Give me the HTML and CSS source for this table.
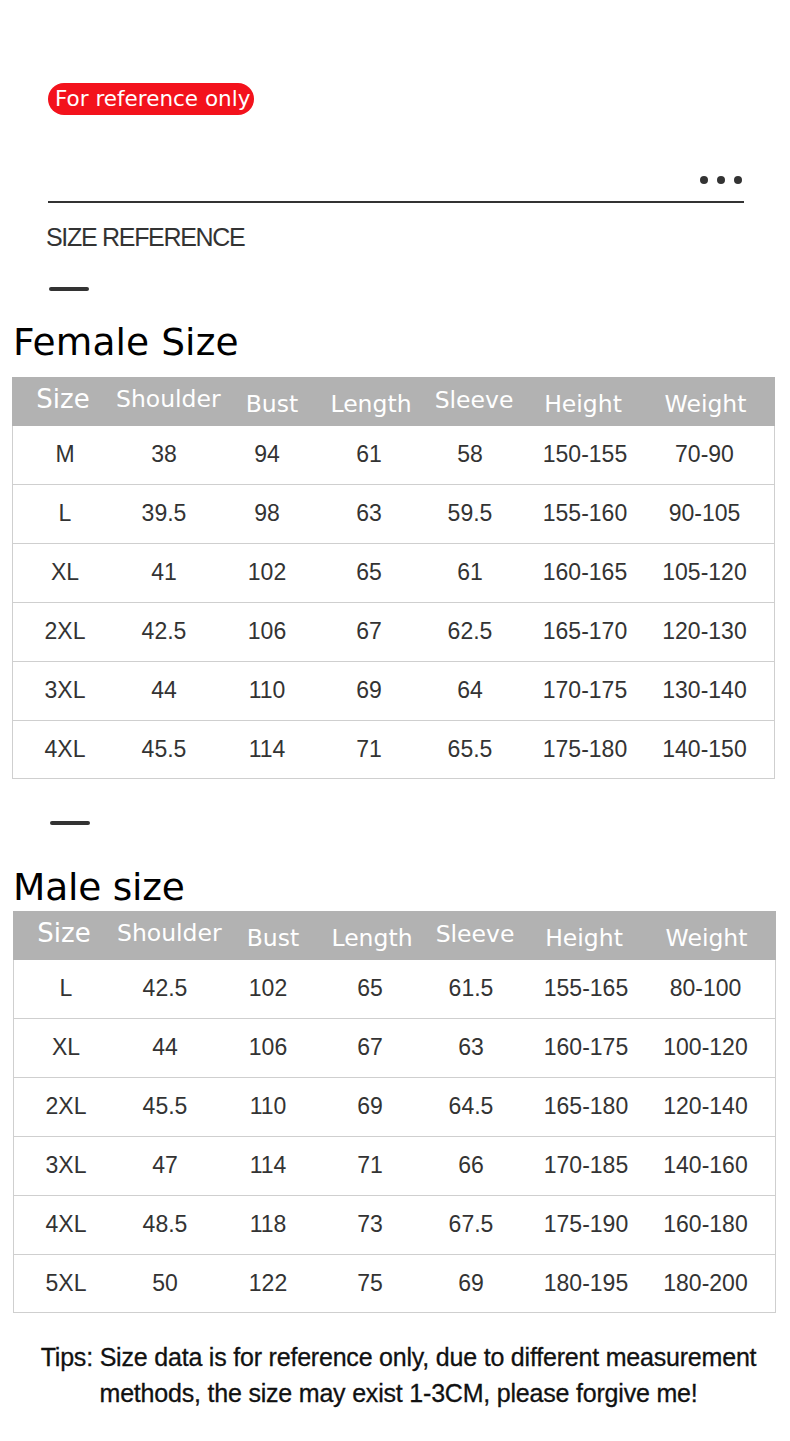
FILE: index.html
```html
<!DOCTYPE html>
<html>
<head>
<meta charset="utf-8">
<link rel="stylesheet" href="styles.css">
</head>
<body>
<div class="page">
  <div class="top">
    <span class="pill">For reference only</span>
  </div>
  <div class="rule-row">
    <div class="dots"><i></i><i></i><i></i></div>
    <div class="rule"></div>
  </div>
  <div class="ref-title">SIZE REFERENCE</div>
  <div class="dash dash-1"></div>
  <h2 class="sec-title female">Female Size</h2>
  <div class="table t-female">
    <div class="row head">
      <div class="c h-size">Size</div><div class="c h-shoulder">Shoulder</div><div class="c h-bust">Bust</div><div class="c h-length">Length</div><div class="c h-sleeve">Sleeve</div><div class="c h-height">Height</div><div class="c h-weight">Weight</div>
    </div>
    <div class="row"><div class="c">M</div><div class="c">38</div><div class="c">94</div><div class="c">61</div><div class="c">58</div><div class="c">150-155</div><div class="c">70-90</div></div>
    <div class="row"><div class="c">L</div><div class="c">39.5</div><div class="c">98</div><div class="c">63</div><div class="c">59.5</div><div class="c">155-160</div><div class="c">90-105</div></div>
    <div class="row"><div class="c">XL</div><div class="c">41</div><div class="c">102</div><div class="c">65</div><div class="c">61</div><div class="c">160-165</div><div class="c">105-120</div></div>
    <div class="row"><div class="c">2XL</div><div class="c">42.5</div><div class="c">106</div><div class="c">67</div><div class="c">62.5</div><div class="c">165-170</div><div class="c">120-130</div></div>
    <div class="row"><div class="c">3XL</div><div class="c">44</div><div class="c">110</div><div class="c">69</div><div class="c">64</div><div class="c">170-175</div><div class="c">130-140</div></div>
    <div class="row last"><div class="c">4XL</div><div class="c">45.5</div><div class="c">114</div><div class="c">71</div><div class="c">65.5</div><div class="c">175-180</div><div class="c">140-150</div></div>
  </div>
  <div class="dash dash-2"></div>
  <h2 class="sec-title male">Male size</h2>
  <div class="table t-male">
    <div class="row head">
      <div class="c h-size">Size</div><div class="c h-shoulder">Shoulder</div><div class="c h-bust">Bust</div><div class="c h-length">Length</div><div class="c h-sleeve">Sleeve</div><div class="c h-height">Height</div><div class="c h-weight">Weight</div>
    </div>
    <div class="row"><div class="c">L</div><div class="c">42.5</div><div class="c">102</div><div class="c">65</div><div class="c">61.5</div><div class="c">155-165</div><div class="c">80-100</div></div>
    <div class="row"><div class="c">XL</div><div class="c">44</div><div class="c">106</div><div class="c">67</div><div class="c">63</div><div class="c">160-175</div><div class="c">100-120</div></div>
    <div class="row"><div class="c">2XL</div><div class="c">45.5</div><div class="c">110</div><div class="c">69</div><div class="c">64.5</div><div class="c">165-180</div><div class="c">120-140</div></div>
    <div class="row"><div class="c">3XL</div><div class="c">47</div><div class="c">114</div><div class="c">71</div><div class="c">66</div><div class="c">170-185</div><div class="c">140-160</div></div>
    <div class="row"><div class="c">4XL</div><div class="c">48.5</div><div class="c">118</div><div class="c">73</div><div class="c">67.5</div><div class="c">175-190</div><div class="c">160-180</div></div>
    <div class="row last"><div class="c">5XL</div><div class="c">50</div><div class="c">122</div><div class="c">75</div><div class="c">69</div><div class="c">180-195</div><div class="c">180-200</div></div>
  </div>
  <p class="tips">Tips: Size data is for reference only, due to different measurement<br>methods, the size may exist 1-3CM, please forgive me!</p>
</div>
</body>
</html>
```
FILE: styles.css
```css
html, body {
  margin: 0;
  padding: 0;
  background: #fff;
}
.page {
  width: 790px;
  height: 1441px;
  overflow: hidden;
  font-family: "DejaVu Sans", sans-serif;
}
.top {
  padding: 83px 0 0 48px;
  height: 32px;
}
.pill {
  display: inline-block;
  height: 32px;
  line-height: 32px;
  padding: 0 0 0 7px;
  width: 199px;
  border-radius: 16px;
  background: #f3121c;
  color: #fff;
  font-size: 21.5px;
  white-space: nowrap;
  overflow: hidden;
}
.rule-row {
  margin: 61px 0 0 48px;
  width: 696px;
}
.dots {
  display: flex;
  justify-content: flex-end;
  gap: 9px;
  height: 8px;
  padding-right: 2px;
}
.dots i {
  display: block;
  width: 8px;
  height: 8px;
  border-radius: 50%;
  background: #333;
}
.rule {
  margin-top: 17px;
  height: 1.5px;
  background: #333;
}
.ref-title {
  margin: 20px 0 0 46px;
  font-family: "Liberation Sans", Arial, sans-serif;
  font-size: 25px;
  letter-spacing: -1.3px;
  color: #333;
  line-height: 28px;
}
.dash {
  width: 40px;
  height: 4px;
  border-radius: 2px;
  background: #333;
}
.dash-1 {
  margin: 36px 0 0 49px;
}
.sec-title {
  margin: 0;
  font-weight: normal;
  font-size: 37.5px;
  line-height: 44px;
  color: #000;
  letter-spacing: 0.1px;
}
.female {
  margin: 29px 0 0 13px;
}
.male {
  margin: 40px 0 0 13px;
  letter-spacing: -0.2px;
}
.dash-2 {
  margin: 42px 0 0 50px;
}
.table {
  width: 761px;
  border: 1px solid #cfcfcf;
  border-top: none;
}
.t-female {
  margin: 13px 0 0 12px;
}
.t-male {
  margin: 2px 0 0 13px;
}
.row {
  display: grid;
  grid-template-columns: 104px 94px 112px 92px 110px 120px 129px;
  height: 58px;
  border-bottom: 1px solid #cfcfcf;
  align-items: center;
  font-family: "Liberation Sans", Arial, sans-serif;
  font-size: 23px;
  color: #333;
}
.row.last {
  border-bottom: none;
  height: 57px;
}
.row.head {
  height: 49px;
  background: #b2b2b2;
  border-bottom: none;
  margin: 0 -1px;
  font-family: "DejaVu Sans", sans-serif;
  font-size: 23.5px;
  color: #fff;
}
.c {
  text-align: center;
  white-space: nowrap;
}
.row .c:nth-child(7) {
  padding-right: 10px;
}
.row.head .c { position: relative; }
.h-size { top: -2px; left: -1px; font-size: 26px; }
.h-shoulder { top: -2px; left: 0; }
.h-bust { top: 3px; left: 6px; }
.h-length { top: 3px; left: 3px; }
.h-sleeve { top: -1px; left: 5px; }
.h-height { top: 3px; left: -1px; }
.h-weight { top: 3px; left: 2px; }
.tips {
  margin: 26px 0 0;
  padding-left: 7px;
  text-align: center;
  font-family: "Liberation Sans", Arial, sans-serif;
  font-size: 25px;
  line-height: 36px;
  color: #111;
  letter-spacing: -0.2px;
  -webkit-text-stroke: 0.3px #111;
}
```
